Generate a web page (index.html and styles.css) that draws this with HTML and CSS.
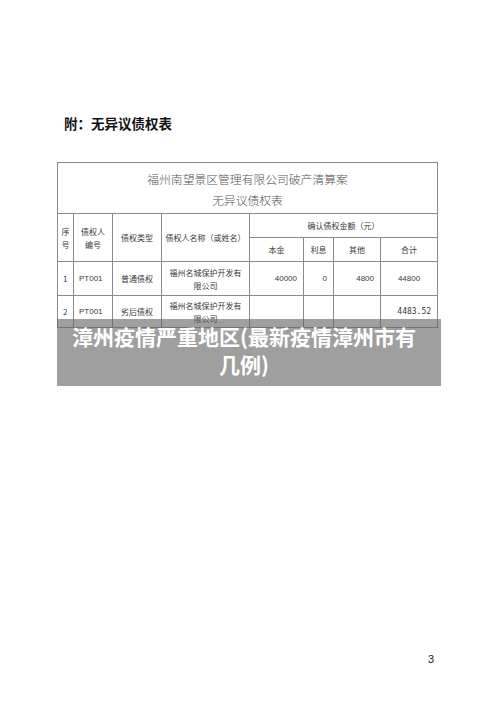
FILE: index.html
```html
<!DOCTYPE html>
<html lang="zh">
<head>
<meta charset="utf-8">
<link rel="stylesheet" href="styles.css">
</head>
<body>
<div class="page">
  <h1 class="heading">附：无异议债权表</h1>
  <div class="table-wrap">
    <table class="debt">
      <colgroup>
        <col class="c1"><col class="c2"><col class="c3"><col class="c4">
        <col class="c5"><col class="c6"><col class="c7"><col class="c8">
      </colgroup>
      <tr class="r-title">
        <td colspan="8" class="title">福州南望景区管理有限公司破产清算案<br>无异议债权表</td>
      </tr>
      <tr class="r-h1">
        <td rowspan="2">序<br>号</td>
        <td rowspan="2">债权人<br>编号</td>
        <td rowspan="2">债权类型</td>
        <td rowspan="2">债权人名称（或姓名）</td>
        <td colspan="4">确认债权金额（元）</td>
      </tr>
      <tr class="r-h2">
        <td>本金</td><td>利息</td><td>其他</td><td>合计</td>
      </tr>
      <tr class="r-d1">
        <td class="left">1</td>
        <td class="left latin">PT001</td>
        <td>普通债权</td>
        <td>福州名城保护开发有<br>限公司</td>
        <td class="num">40000</td>
        <td class="num">0</td>
        <td class="num">4800</td>
        <td class="latin">44800</td>
      </tr>
      <tr class="r-d2">
        <td class="left">2</td>
        <td class="left latin">PT001</td>
        <td>劣后债权</td>
        <td>福州名城保护开发有<br>限公司</td>
        <td></td>
        <td></td>
        <td></td>
        <td class="mono">4483.52</td>
      </tr>
    </table>
    <div class="caption">漳州疫情严重地区(最新疫情漳州市有<br>几例)</div>
  </div>
  <div class="pageno">3</div>
</div>
</body>
</html>
```

FILE: styles.css
```css
html, body {
  margin: 0;
  padding: 0;
  background: #ffffff;
}
.page {
  width: 500px;
  min-height: 706px;
  box-sizing: border-box;
  padding-top: 115px;
  padding-bottom: 40px;
  display: flex;
  flex-direction: column;
  font-family: "Noto Sans CJK SC", "Noto Sans", sans-serif;
  color: #333;
}
.heading {
  margin: 0 0 0 64px;
  font-size: 13.5px;
  line-height: 17px;
  font-weight: 700;
  color: #111;
}
.table-wrap {
  position: relative;
  margin: 30px 0 0 57px;
  width: 384px;
}
.debt {
  border-collapse: collapse;
  table-layout: fixed;
  width: 381px;
  font-size: 8px;
  color: #3a3a3a;
}
.debt td {
  border: 1px solid #8a8a8a;
  padding: 0;
  text-align: center;
  vertical-align: middle;
  line-height: 13px;
  font-weight: 400;
}
.c1 { width: 16px; }
.c2 { width: 39px; }
.c3 { width: 49px; }
.c4 { width: 88px; }
.c5 { width: 54px; }
.c6 { width: 30px; }
.c7 { width: 47px; }
.c8 { width: 57px; }
.r-title { height: 51px; }
.r-h1 { height: 24px; }
.r-h2 { height: 24px; }
.r-d1 { height: 34px; }
.r-d2 { height: 32px; }
.debt td.title {
  font-size: 11.8px;
  line-height: 21px;
  color: #555;
  font-weight: 300;
  padding-top: 2px;
}
.debt td.left {
  text-align: left;
  padding-left: 5px;
}
.debt td.latin {
  font-family: "Liberation Sans", sans-serif;
}
.debt td.num {
  text-align: right;
  padding-right: 6px;
  font-family: "Liberation Sans", sans-serif;
}
.debt td.mono {
  font-family: "DejaVu Sans Mono", monospace;
  text-align: right;
  padding-right: 6px;
}
.caption {
  position: absolute;
  left: 0;
  top: 157px;
  width: 384px;
  height: 67px;
  box-sizing: border-box;
  padding-top: 3px;
  padding-right: 10px;
  background: rgba(100, 100, 100, 0.62);
  color: #fff;
  font-size: 21px;
  line-height: 28px;
  font-weight: 700;
  text-align: center;
}
.pageno {
  margin-top: auto;
  margin-left: 428px;
  font-family: "Liberation Sans", sans-serif;
  font-size: 11px;
  line-height: 13px;
  color: #222;
}
```
